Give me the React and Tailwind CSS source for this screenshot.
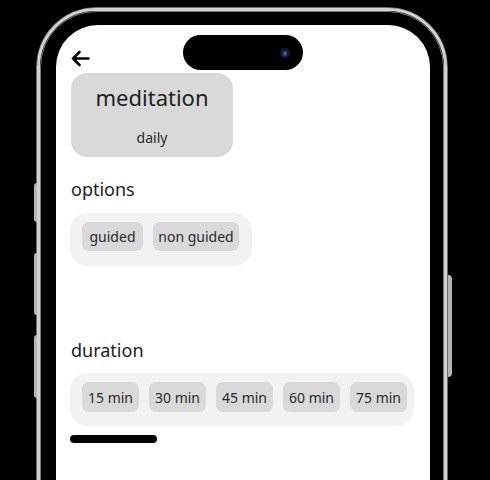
import React from "react";

const font = { fontFamily: '"Noto Sans", "Open Sans", sans-serif' };

function BackArrow() {
  return (
    <svg width="19" height="17" viewBox="0 0 19 17" fill="none">
      <path
        d="M8.5 2 L2 8.5 L8.5 15 M2 8.5 H17.5"
        stroke="#000"
        strokeWidth="2.6"
        strokeLinecap="round"
        strokeLinejoin="round"
      />
    </svg>
  );
}

function Chip({ label, w }) {
  return (
    <div
      className={`h-[29px] ${w} rounded-[7px] bg-[#d9d9d9] flex items-center justify-center text-[14px] text-[#2a2a2a]`}
    >
      {label}
    </div>
  );
}

export default function App() {
  const durations = ["15 min", "30 min", "45 min", "60 min", "75 min"];

  return (
    <div className="w-[490px] h-[480px] bg-black overflow-hidden pl-[36px] pt-[7px]" style={font}>
      <div className="relative w-[412px]">
        {/* side buttons */}
        <div className="absolute left-[-2px] top-[176px] w-[3px] h-[39px] rounded-l-sm bg-[#b5b5b5]" />
        <div className="absolute left-[-2px] top-[246px] w-[3px] h-[62px] rounded-l-sm bg-[#b5b5b5]" />
        <div className="absolute left-[-2px] top-[328px] w-[3px] h-[63px] rounded-l-sm bg-[#b5b5b5]" />
        <div className="absolute right-[-4px] top-[268px] w-[4px] h-[102px] rounded-r-sm bg-[#b5b5b5]" />

        {/* rim */}
        <div className="rounded-[60px] border border-[#6e6e6e]">
          <div className="rounded-[59px] border-[3px] border-[#d2d2d2]">
            <div className="rounded-[56px] border border-[#7a7a7a] bg-black pl-[15px] pr-[13px] pt-[13px] pb-[13px]">
              {/* screen */}
              <div className="relative h-[520px] rounded-[42px] bg-white pl-[15px]">
                {/* dynamic island */}
                <div className="absolute left-[127px] top-[10px] w-[120px] h-[35px] rounded-full bg-black">
                  <div className="absolute left-[97px] top-[13px] w-[10px] h-[10px] rounded-full bg-[#141a33] flex items-center justify-center">
                    <div className="w-[4px] h-[5px] rounded-full bg-[#3b4d9a]" />
                  </div>
                </div>

                <div className="pt-[25px]">
                  <BackArrow />
                </div>

                <div className="mt-[6px] w-[162px] h-[84px] rounded-[16px] bg-[#d9d9d9] flex flex-col items-center pt-[10px]">
                  <div className="text-[22px] leading-[28px] text-[#1f1f1f]">meditation</div>
                  <div className="mt-[17px] text-[14px] leading-[20px] text-[#2a2a2a]">daily</div>
                </div>

                <div className="mt-[20px] text-[18px] leading-[24px] text-[#222]">options</div>
                <div className="mt-[12px] -ml-[1px] w-fit rounded-[18px] bg-[#f2f2f2] pl-[12px] pr-[13px] pt-[9px] pb-[15px] flex gap-[10px]">
                  <Chip label="guided" w="w-[61px]" />
                  <Chip label="non guided" w="w-[86px]" />
                </div>

                <div className="mt-[72px] text-[18px] leading-[24px] text-[#222]">duration</div>
                <div className="mt-[11px] -ml-[1px] w-fit rounded-[18px] bg-[#f2f2f2] pl-[12px] pr-[7px] pt-[9px] pb-[14px] flex gap-[10px]">
                  {durations.map((d) => (
                    <Chip key={d} label={d} w="w-[57px] h-[30px]" />
                  ))}
                </div>

                <div className="mt-[9px] -ml-[1px] w-[87px] h-[8px] rounded-full bg-black" />
              </div>
            </div>
          </div>
        </div>
      </div>
    </div>
  );
}
